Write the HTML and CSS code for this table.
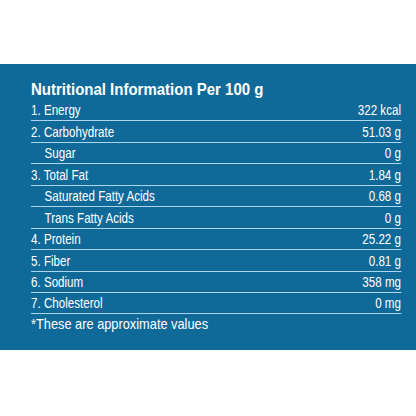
FILE: index.html
```html
<!DOCTYPE html>
<html>
<head>
<meta charset="utf-8">
<link rel="stylesheet" href="styles.css">
</head>
<body>
<div class="page">
  <section class="panel">
    <h1 class="title">Nutritional Information Per 100 g</h1>
    <ul class="rows">
      <li class="row"><span>1. Energy</span><span>322 kcal</span></li>
      <li class="row"><span>2. Carbohydrate</span><span>51.03 g</span></li>
      <li class="row sub"><span>Sugar</span><span>0 g</span></li>
      <li class="row"><span>3. Total Fat</span><span>1.84 g</span></li>
      <li class="row sub"><span>Saturated Fatty Acids</span><span>0.68 g</span></li>
      <li class="row sub"><span>Trans Fatty Acids</span><span>0 g</span></li>
      <li class="row"><span>4. Protein</span><span>25.22 g</span></li>
      <li class="row"><span>5. Fiber</span><span>0.81 g</span></li>
      <li class="row"><span>6. Sodium</span><span>358 mg</span></li>
      <li class="row"><span>7. Cholesterol</span><span>0 mg</span></li>
    </ul>
    <p class="note">*These are approximate values</p>
  </section>
</div>
</body>
</html>
```
FILE: styles.css
```css
html, body {
  margin: 0;
  padding: 0;
  background: #ffffff;
}
.page {
  width: 416px;
  height: 416px;
  padding-top: 64px;
  box-sizing: border-box;
}
.panel {
  height: 286px;
  background: #0f6a9a;
  color: #ffffff;
  padding: 16px 15px 0 31px;
  box-sizing: border-box;
  font-family: "Liberation Sans", Arial, sans-serif;
}
.title {
  margin: 0;
  font-size: 16px;
  line-height: 20px;
  font-weight: bold;
  white-space: nowrap;
  transform: scaleX(0.937);
  transform-origin: left top;
}
.rows {
  list-style: none;
  margin: 0;
  padding: 0;
  width: 462.5px;
  transform: scaleX(0.8);
  transform-origin: left top;
}
.row {
  display: flex;
  justify-content: space-between;
  align-items: flex-end;
  height: 21.45px;
  box-sizing: border-box;
  border-bottom: 1px solid #acd6ed;
  font-size: 14.5px;
  line-height: 16px;
  padding-bottom: 2px;
}
.row.sub span:first-child {
  padding-left: 17px;
}
.note {
  margin: 0;
  padding-top: 1px;
  font-size: 15px;
  line-height: 18px;
  white-space: nowrap;
  transform: scaleX(0.853);
  transform-origin: left top;
}
```
